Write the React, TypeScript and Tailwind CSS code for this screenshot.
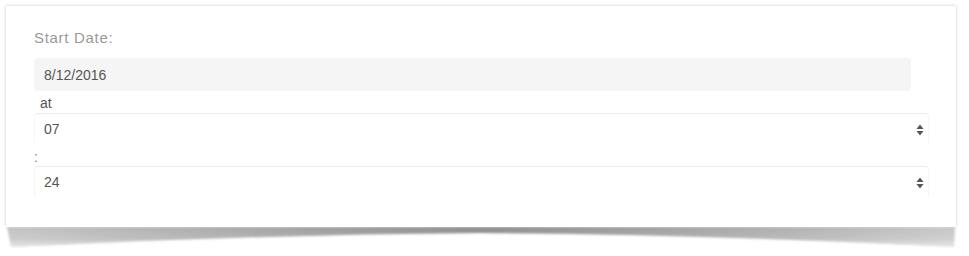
export default function App() {
  return (
    <div className="min-h-screen bg-white pl-[6px] pt-[6px]" style={{ fontFamily: '"Liberation Sans", Arial, sans-serif' }}>
      <div className="w-[950px]">
        <div className="h-[221px] bg-white pl-[28px] pt-[22px] shadow-[0_0_3px_rgba(0,0,0,0.22)]">
          <div className="text-[15px] leading-[20px] tracking-[0.7px] text-[#999]">Start Date:</div>
          <div className="mt-[10px] flex h-[33px] w-[877px] items-center rounded-[4px] bg-[#f5f5f5] pl-[10px] pt-[1px] text-[14px] text-[#555]">
            8/12/2016
          </div>
          <div className="pl-[6px] pt-[2px] text-[14px] leading-[20px] text-[#555]">at</div>
          <TimeSelect value="07" />
          <div className="pt-[4px] text-[14px] leading-[17px] text-[#888]">:</div>
          <TimeSelect value="24" />
        </div>
        <svg width="954" height="26" viewBox="0 0 954 26" className="block">
          <defs>
            <linearGradient id="sh" x1="0" x2="1" y1="0" y2="0">
              <stop offset="0" stopColor="#c4c4c4" />
              <stop offset="0.2" stopColor="#adadad" />
              <stop offset="0.5" stopColor="#8c8c8c" />
              <stop offset="0.8" stopColor="#adadad" />
              <stop offset="1" stopColor="#c8c8c8" />
            </linearGradient>
            <linearGradient id="fade" x1="0" x2="0" y1="0" y2="1">
              <stop offset="0" stopColor="#fff" stopOpacity="0" />
              <stop offset="0.6" stopColor="#fff" stopOpacity="0.15" />
              <stop offset="1" stopColor="#fff" stopOpacity="0.6" />
            </linearGradient>
            <filter id="bl" x="-5%" y="-50%" width="110%" height="200%">
              <feGaussianBlur stdDeviation="1.2" />
            </filter>
          </defs>
          <g filter="url(#bl)">
            <path d="M1 0 L949 0 L948 20 Q 720 8 475 6 Q 240 8 5 20 Z" fill="url(#sh)" />
            <path d="M1 0 L949 0 L948 20 Q 720 8 475 6 Q 240 8 5 20 Z" fill="url(#fade)" />
          </g>
        </svg>
      </div>
    </div>
  );
}

function TimeSelect({ value }: { value: string }) {
  return (
    <div className="flex h-[32px] w-[895px] items-center justify-between rounded-[4px] border border-b-0 border-[#f5f5f5] border-t-[#ebebeb] pl-[9px] pr-[4px] text-[14px] text-[#555]">
      <span>{value}</span>
      <svg width="8" height="12" viewBox="0 0 8 12">
        <path d="M4 0.5 L7.5 5 L0.5 5 Z" fill="#555" />
        <path d="M4 11.5 L7.5 7 L0.5 7 Z" fill="#555" />
      </svg>
    </div>
  );
}
